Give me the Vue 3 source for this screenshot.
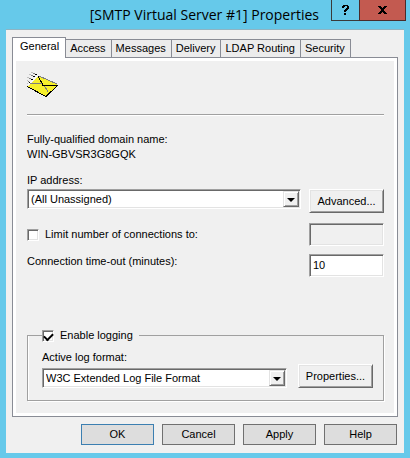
<template>
  <form class="window" @submit.prevent>
    <header class="titlebar">
      <h1 class="title">[SMTP Virtual Server #1] Properties</h1>
      <div class="caption-buttons">
        <button type="button" class="caption help" aria-label="Context help">
          <svg width="7" height="10" viewBox="0 0 7 10" shape-rendering="crispEdges">
            <path d="M1 0h5v1h1v3h-1v1h-1v1h-1v1h-2v-2h1v-1h1v-1h1v-2h-2v1h-1v1h-2v-2h1z M2 8h2v2h-2z" />
          </svg>
        </button>
        <button type="button" class="caption close" aria-label="Close">
          <svg width="9" height="8" viewBox="0 0 9 8" shape-rendering="crispEdges">
            <path d="M0 0h3v1h1v1h1v-1h1v-1h3v1h-1v1h-1v1h-1v2h1v1h1v1h1v1h-3v-1h-1v-1h-1v1h-1v1h-3v-1h1v-1h1v-1h1v-2h-1v-1h-1v-1h-1z" />
          </svg>
        </button>
      </div>
    </header>

    <main class="body">
      <nav class="tabs" role="tablist">
        <button
          v-for="tab in tabs"
          :key="tab"
          type="button"
          role="tab"
          class="tab"
          :class="{ active: tab === activeTab }"
          :aria-selected="tab === activeTab"
          @click="activeTab = tab"
        >{{ tab }}</button>
      </nav>

      <section class="panel" role="tabpanel">
        <svg class="mail" width="32" height="28" viewBox="0 0 32 28" shape-rendering="crispEdges" aria-hidden="true">
          <path d="M0 16L11 5L31 14L19 25Z" fill="#f6f02c" />
          <g fill="none" stroke-width="1">
            <path d="M1 14L10 5" stroke="#fff" />
            <path d="M3 12.5H15M17 14L21 21M12 5L30 13" stroke="#808080" />
            <path d="M0 15.5L19 25.5L31 14M11 5L16 14" stroke="#000" />
            <path d="M15 14.5H31" stroke="#000" />
            <path d="M4 1.5h2M2 3.5h2M0 6.5h2M0 9.5h1M0 12.5h1" stroke="#c0c0c0" />
            <path d="M6 2.5h2M4 4.5h2M2 7.5h2M1 10.5h1" stroke="#808080" />
            <path d="M8 3.5h2M6 5.5h2M4 8.5h2M2 11.5h1" stroke="#000" />
          </g>
        </svg>

        <hr class="rule" />

        <p class="domain">
          Fully-qualified domain name:<br />
          <span>WIN-GBVSR3G8GQK</span>
        </p>

        <label class="ip-label" for="ip">IP address:</label>
        <div class="row">
          <div class="combo">
            <select id="ip" v-model="ip">
              <option>(All Unassigned)</option>
            </select>
            <span class="arrow"></span>
          </div>
          <button type="button" class="classic">Advanced...</button>
        </div>

        <div class="row limit">
          <label class="check">
            <input type="checkbox" v-model="limited" />
            Limit number of connections to:
          </label>
          <input class="field" type="text" aria-label="Connection limit" :disabled="!limited" />
        </div>

        <div class="row timeout">
          <label for="timeout">Connection time-out (minutes):</label>
          <input id="timeout" class="field" type="text" v-model="timeout" />
        </div>

        <fieldset class="logging">
          <legend>
            <label class="check">
              <input type="checkbox" v-model="logging" />
              Enable logging
            </label>
          </legend>
          <div class="log-row">
            <div class="log-format">
              <label for="format">Active log format:</label>
              <div class="combo">
                <select id="format" v-model="format">
                  <option>W3C Extended Log File Format</option>
                </select>
                <span class="arrow"></span>
              </div>
            </div>
            <button type="button" class="classic">Properties...</button>
          </div>
        </fieldset>
      </section>

      <footer class="actions">
        <button type="submit" class="action default">OK</button>
        <button type="button" class="action">Cancel</button>
        <button type="button" class="action">Apply</button>
        <button type="button" class="action">Help</button>
      </footer>
    </main>
  </form>
</template>

<script setup>
import { ref } from 'vue'

const tabs = ['General', 'Access', 'Messages', 'Delivery', 'LDAP Routing', 'Security']
const activeTab = ref('General')

const ip = ref('(All Unassigned)')
const limited = ref(false)
const timeout = ref('10')
const logging = ref(true)
const format = ref('W3C Extended Log File Format')
</script>

<style>
body {
  margin: 0;
  background: #66c9ea;
}
</style>

<style scoped>
* {
  box-sizing: border-box;
}

.window {
  padding: 0 6px 5px;
  background: #66c9ea;
  color: #000;
  font-family: "Liberation Sans", Arial, sans-serif;
  font-size: 11px;
  line-height: 15px;
}

button,
input,
select {
  margin: 0;
  color: inherit;
  font: inherit;
}

/* title bar */
.titlebar {
  display: flex;
  height: 29px;
}

.title {
  flex: 1;
  margin: 0;
  padding-right: 12px;
  font-family: "Open Sans", sans-serif;
  font-size: 14px;
  font-weight: 400;
  line-height: 30px;
  text-align: right;
  white-space: nowrap;
}

.caption-buttons {
  display: flex;
  height: 21px;
  margin-right: -2px;
}

.caption {
  display: flex;
  align-items: center;
  justify-content: center;
  padding: 0;
  border: 1px solid #3a3a3a;
  border-top: 0;
}

.help {
  width: 28px;
  background: #66c9ea;
  border-right: 0;
}

.close {
  width: 47px;
  background: #c35a50;
  border-color: #4a2c2a;
}

.body {
  padding: 7px 6px 8px;
  background: #f0f0f0;
  border-top: 1px solid #8fb4c2;
}

/* tabs */
.tabs {
  display: flex;
  align-items: flex-end;
}

.tab {
  height: 18px;
  padding: 0 5px 0 4px;
  background: #ececec;
  border: 1px solid #898c95;
  border-left-width: 0;
  border-bottom: 0;
  white-space: nowrap;
}

.tab.active {
  position: relative;
  height: 21px;
  margin-bottom: -1px;
  padding: 0 6px 4px 7px;
  background: #fff;
  border-left-width: 1px;
}

.panel {
  padding: 13px 13px 15px 14px;
  border: 1px solid #898c95;
  box-shadow: inset 0 0 0 3px #fff;
}

.mail {
  display: block;
}

.rule {
  height: 2px;
  margin: 15px 0 16px;
  border: 0;
  border-top: 1px solid #a0a0a0;
  border-bottom: 1px solid #fff;
}

.domain {
  margin: 0 0 11px;
}

.ip-label {
  display: block;
  margin-bottom: 1px;
}

.row {
  display: flex;
  align-items: flex-start;
  justify-content: space-between;
  gap: 8px;
}

.limit {
  margin-top: 10px;
}

.timeout {
  margin-top: 8px;
}

.check {
  display: flex;
  align-items: center;
  gap: 6px;
}

.limit .check {
  height: 23px;
}

.check input {
  appearance: none;
  width: 12px;
  height: 12px;
  background: #fff;
  border: 1px solid;
  border-color: #a0a0a0 #fff #fff #a0a0a0;
  box-shadow: inset 1px 1px #696969, inset -1px -1px #e3e3e3;
}

.check input:checked::before {
  content: "";
  display: block;
  width: 7px;
  height: 4px;
  margin: 2px 0 0 1px;
  border: solid #000;
  border-width: 0 0 2px 2px;
  transform: rotate(-45deg);
}

.field {
  width: 75px;
  height: 23px;
  padding: 0 3px 2px;
  background: #fff;
  border: 1px solid;
  border-color: #a0a0a0 #fff #fff #a0a0a0;
  border-radius: 0;
  box-shadow: inset 1px 1px #696969, inset -1px -1px #e3e3e3;
}

.field:disabled {
  background: #f0f0f0;
}

.combo {
  position: relative;
  flex: 1;
}

.combo select {
  appearance: none;
  display: block;
  width: 100%;
  height: 20px;
  padding: 0 20px 0 3px;
  background: #fff;
  border: 1px solid;
  border-color: #a0a0a0 #fff #fff #a0a0a0;
  border-radius: 0;
  box-shadow: inset 1px 1px #696969, inset -1px -1px #e3e3e3;
}

.arrow {
  position: absolute;
  top: 2px;
  right: 2px;
  width: 16px;
  height: 16px;
  background: #f0f0f0;
  border: 1px solid;
  border-color: #e3e3e3 #696969 #696969 #e3e3e3;
  box-shadow: inset 1px 1px #fff, inset -1px -1px #a0a0a0;
  pointer-events: none;
}

.arrow::after {
  content: "";
  position: absolute;
  top: 6px;
  left: 3px;
  border: 4px solid transparent;
  border-top-color: #000;
  border-bottom: 0;
}

.classic {
  width: 75px;
  height: 24px;
  padding: 0;
  background: #f0f0f0;
  border: 1px solid;
  border-color: #fff #696969 #696969 #fff;
  box-shadow: inset 1px 1px #e3e3e3, inset -1px -1px #a0a0a0;
}

.logging {
  min-width: 0;
  margin: 51px 0 0;
  padding: 7px 10px 12px 14px;
  border: 1px solid #a0a0a0;
  box-shadow: 1px 1px #fff, inset 1px 0 #fff;
}

.logging legend {
  padding: 0 6px 0 0;
}

.log-row {
  display: flex;
  align-items: flex-end;
  gap: 11px;
}

.log-format {
  flex: 1;
}

.log-format label {
  display: block;
  margin-bottom: 3px;
}

/* dialog buttons */
.actions {
  display: flex;
  justify-content: flex-end;
  gap: 8px;
  margin-top: 7px;
  padding-right: 1px;
}

.action {
  width: 73px;
  height: 21px;
  padding: 0;
  background: #dddddd;
  border: 1px solid #707070;
}

.action.default {
  border-color: #3c7fb1;
}
</style>
